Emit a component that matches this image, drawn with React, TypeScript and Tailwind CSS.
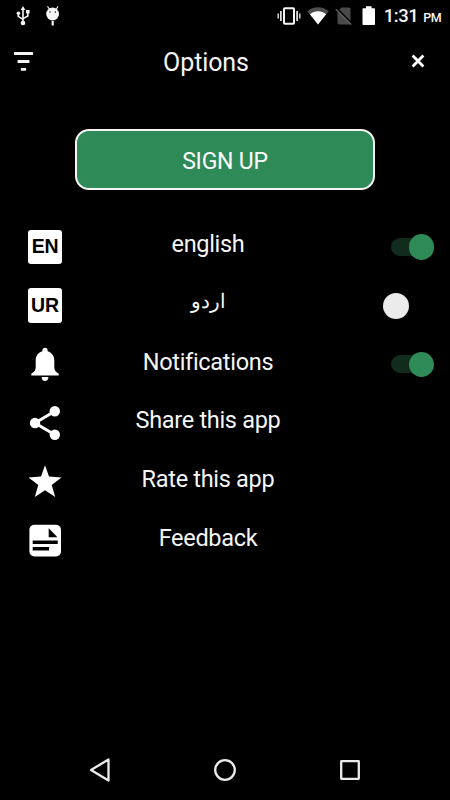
import { useState, type ReactNode } from "react";
import clsx from "clsx";

type SwitchProps = {
  checked: boolean;
  onChange: () => void;
  label: string;
};

type RowProps = {
  icon: ReactNode;
  label: string;
  rtl?: boolean;
  children?: ReactNode;
};

function StatusBar() {
  return (
    <div className="flex h-8 items-center justify-between pl-[16px] pr-[9px]">
      <div className="flex items-center gap-[16px]">
        {/* USB */}
        <svg width="14" height="20" viewBox="0 0 14 20" fill="#f5f5f5">
          <path d="M7 0 9.3 4H4.7z" />
          <path d="M6.2 3h1.6v14H6.2z" />
          <path d="M2.3 7v3.4L7 13.4M11.8 6v4L7 12.6" fill="none" stroke="#f5f5f5" strokeWidth="1.6" />
          <circle cx="2.4" cy="7.2" r="1.8" />
          <path d="M10 4h3.6v3.4H10z" />
          <circle cx="7" cy="17" r="2.3" />
        </svg>
        {/* Debug droid */}
        <svg width="14" height="20" viewBox="0 0 14 20">
          <path d="M1.5.4 4 4M12 .4 9.8 4" stroke="#f5f5f5" strokeWidth="1.1" />
          <circle cx="6.6" cy="8" r="6.4" fill="#f5f5f5" />
          <circle cx="4" cy="6" r=".7" fill="#000" />
          <circle cx="9.3" cy="6" r=".7" fill="#000" />
          <path d="M5.6 15h2.2v4.5H5.6z" fill="#f5f5f5" />
        </svg>
      </div>
      <div className="flex items-center">
        {/* Vibrate */}
        <svg width="24" height="20" viewBox="0 0 24 20" fill="none" stroke="#f5f5f5">
          <rect x="7" y="2.2" width="10" height="15.5" rx=".8" strokeWidth="2" />
          <path d="M1.2 7.5v5M22.8 7.5v5" strokeWidth="1.3" />
          <path d="M3.9 5v10M20.1 5v10" strokeWidth="1.6" />
        </svg>
        {/* Wifi */}
        <svg className="ml-[6px]" width="22" height="20" viewBox="0 0 22 20">
          <path d="M.3 5.2C6.5-.2 15.5-.2 21.7 5.2L11 18.6z" fill="#4d4d4d" />
          <path d="M2.9 8.2C7.5 4.3 14.5 4.3 19.1 8.2L11 18.6z" fill="#fff" />
        </svg>
        {/* No SIM */}
        <svg className="ml-[6px]" width="18" height="20" viewBox="0 0 18 20">
          <path d="M6.5 1.5H14a1.5 1.5 0 0 1 1.5 1.5v14a1.5 1.5 0 0 1-1.5 1.5H4A1.5 1.5 0 0 1 2.5 17V5.5z" fill="#4a4a4a" />
          <path d="M1.6 2.2 17.2 17.8" stroke="#000" strokeWidth="1.8" />
          <path d="M.8 3.2 16.2 18.6" stroke="#5c5c5c" strokeWidth="1.5" />
        </svg>
        {/* Battery */}
        <svg className="ml-[9px]" width="14" height="20" viewBox="0 0 14 20" fill="#fff">
          <path d="M4 .2h5.6v2H12.2a.8.8 0 0 1 .8.8v15.200a.8.8 0 0 1-.8.8H1.3a.8.8 0 0 1-.8-.8V3a.8.8 0 0 1 .8-.8H4z" />
        </svg>
        <div className="ml-[8px] flex items-baseline gap-[5px] pt-px font-medium leading-none text-[#f5f5f5]">
          <span className="text-[18.5px] tracking-[-0.5px]">1:31</span>
          <span className="text-[12.5px] tracking-[-0.6px]">PM</span>
        </div>
      </div>
    </div>
  );
}

function Header() {
  return (
    <header className="grid h-[58px] grid-cols-[60px_1fr_60px] items-center">
      <button className="pl-[14px]" aria-label="Menu">
        <svg width="19" height="20" viewBox="0 0 19 20" fill="#f5f5f5">
          <rect x="0" y="1" width="19" height="3" rx=".6" />
          <rect x="3.5" y="9" width="12" height="3" rx=".8" />
          <rect x="6.8" y="17" width="5.4" height="2.7" rx=".8" />
        </svg>
      </button>
      <h1 className="mr-[38px] pt-[4px] text-center text-[25px] leading-8 tracking-[-0.1px]">Options</h1>
      <button className="pl-[21px]" aria-label="Close">
        <svg width="14" height="14" viewBox="0 0 14 14" stroke="#fff" strokeWidth="2.8">
          <path d="M1.6 1.6 12.4 12.4M12.4 1.6 1.6 12.4" />
        </svg>
      </button>
    </header>
  );
}

function Switch({ checked, onChange, label }: SwitchProps) {
  return (
    <button
      role="switch"
      aria-checked={checked}
      aria-label={label}
      onClick={onChange}
      className="relative flex h-[26px] w-[51px] items-center"
    >
      {checked && <span className="ml-[7.5px] h-[18px] w-[36px] rounded-full bg-[#112b1c]" />}
      <span
        className={clsx(
          "absolute top-[0.5px] size-[25.5px] rounded-full",
          checked ? "right-0 bg-[#2e8b57]" : "left-0 bg-[#ebebeb]"
        )}
      />
    </button>
  );
}

function LanguageBadge({ code }: { code: string }) {
  return (
    <span className="grid size-[34.5px] place-items-center rounded-[3px] bg-white font-['Liberation_Sans',Arial,sans-serif] text-[19.5px] leading-none font-bold tracking-[-0.2px] text-black">
      {code}
    </span>
  );
}

function BellIcon() {
  return (
    <svg width="40" height="40" viewBox="0 0 40 40" fill="#fff">
      <path d="M20 3.8c1.6 0 2.6 1.1 2.6 2.7v.8c4 1.3 6.7 4.6 6.7 9.2v6.8c0 3 1.3 4.7 4.4 6.4v1.8H6.3v-1.8c3.1-1.7 4.4-3.4 4.4-6.4v-6.8c0-4.6 2.7-7.9 6.7-9.2v-.8c0-1.6 1-2.7 2.6-2.7z" />
      <path d="M16.6 32.9h6.8c0 2.4-1.4 4-3.4 4s-3.4-1.6-3.4-4z" />
    </svg>
  );
}

function ShareIcon() {
  return (
    <svg width="40" height="40" viewBox="0 0 40 40" fill="#fff">
      <path d="M29.8 8.3 10 20l19.8 11.8" fill="none" stroke="#fff" strokeWidth="3" />
      <circle cx="29.8" cy="8.3" r="5.2" />
      <circle cx="10" cy="20" r="5.2" />
      <circle cx="29.8" cy="31.8" r="5.2" />
    </svg>
  );
}

function StarIcon() {
  return (
    <svg width="40" height="40" viewBox="0 0 40 40" fill="#fff">
      <path d="M20 3.3l4 11.2 12.5.9-9.8 7.7 3.5 12L20 28.3l-10.2 6.8 3.5-12-9.8-7.7L16 14.5z" />
    </svg>
  );
}

function FeedbackIcon() {
  return (
    <svg width="40" height="40" viewBox="0 0 40 40">
      <rect x="4.4" y="4.8" width="31.6" height="31.6" rx="5" fill="#fff" />
      <path d="M23.7 8.3v8.9h8.8z" />
      <path d="M7.7 20.5h25v3.4h-25zM7.7 27.1h16.4v3.4H7.7z" />
    </svg>
  );
}

function OptionRow({ icon, label, rtl, children }: RowProps) {
  return (
    <li className="grid h-[58.7px] grid-cols-[40px_286px_32px_51px] items-center pl-[25px]">
      <span className="grid size-10 place-items-center">{icon}</span>
      <span
        dir={rtl ? "rtl" : "ltr"}
        className={clsx(
          "text-center leading-8",
          rtl ? "pb-[8px] text-[19.5px]" : "pb-[5px] text-[23.5px] tracking-[-0.3px]"
        )}
      >
        {label}
      </span>
      <span />
      {children}
    </li>
  );
}

function NavBar() {
  return (
    <nav className="mt-auto flex h-[60px] items-center justify-between px-[89px]">
      <svg width="22" height="26" viewBox="0 0 22 26" fill="none" stroke="#ebebeb" strokeWidth="2.3" strokeLinejoin="round">
        <path d="M19.5 2.5v21L2 13z" />
      </svg>
      <svg width="24" height="24" viewBox="0 0 24 24" fill="none" stroke="#ebebeb" strokeWidth="2.3">
        <circle cx="12" cy="12" r="9.8" />
      </svg>
      <svg width="22" height="22" viewBox="0 0 22 22" fill="none" stroke="#ebebeb" strokeWidth="2.3">
        <rect x="2.2" y="2.2" width="17.6" height="17.6" rx=".3" />
      </svg>
    </nav>
  );
}

export default function App() {
  const [language, setLanguage] = useState("en");
  const [notifications, setNotifications] = useState(true);

  return (
    <div className="flex h-[800px] w-[450px] flex-col overflow-hidden bg-black font-['Roboto','Noto_Sans',sans-serif] text-[#f5f5f5]">
      <StatusBar />
      <Header />

      <button className="mx-[75px] mt-[39px] h-[61px] shrink-0 rounded-[14px] border-2 border-[#f5f5f5] bg-[#2e8b57] pt-[3px] text-[23px] leading-none tracking-[-0.2px] text-white">
        SIGN UP
      </button>

      <ul className="mt-[27.5px]">
        <OptionRow icon={<LanguageBadge code="EN" />} label="english">
          <Switch checked={language === "en"} onChange={() => setLanguage("en")} label="english" />
        </OptionRow>
        <OptionRow icon={<LanguageBadge code="UR" />} label="اردو" rtl>
          <Switch checked={language === "ur"} onChange={() => setLanguage("ur")} label="اردو" />
        </OptionRow>
        <OptionRow icon={<BellIcon />} label="Notifications">
          <Switch
            checked={notifications}
            onChange={() => setNotifications((on) => !on)}
            label="Notifications"
          />
        </OptionRow>
        <OptionRow icon={<ShareIcon />} label="Share this app" />
        <OptionRow icon={<StarIcon />} label="Rate this app" />
        <OptionRow icon={<FeedbackIcon />} label="Feedback" />
      </ul>

      <NavBar />
    </div>
  );
}
